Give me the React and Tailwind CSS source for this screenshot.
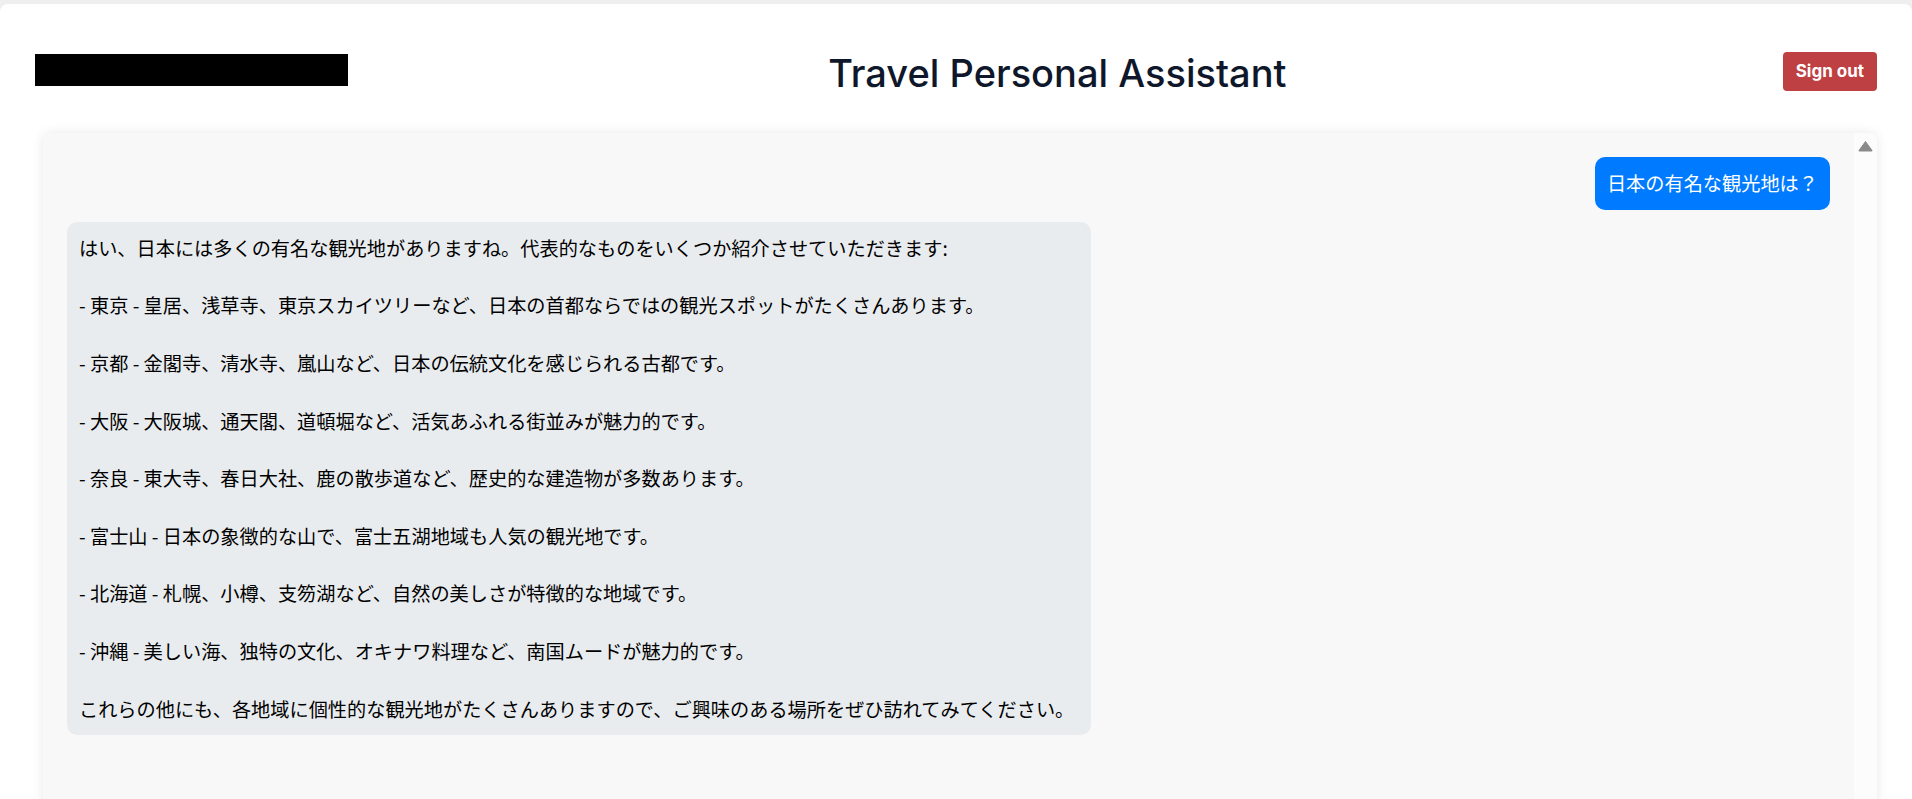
import React from "react";

const answer = `はい、日本には多くの有名な観光地がありますね。代表的なものをいくつか紹介させていただきます:

- 東京 - 皇居、浅草寺、東京スカイツリーなど、日本の首都ならではの観光スポットがたくさんあります。

- 京都 - 金閣寺、清水寺、嵐山など、日本の伝統文化を感じられる古都です。

- 大阪 - 大阪城、通天閣、道頓堀など、活気あふれる街並みが魅力的です。

- 奈良 - 東大寺、春日大社、鹿の散歩道など、歴史的な建造物が多数あります。

- 富士山 - 日本の象徴的な山で、富士五湖地域も人気の観光地です。

- 北海道 - 札幌、小樽、支笏湖など、自然の美しさが特徴的な地域です。

- 沖縄 - 美しい海、独特の文化、オキナワ料理など、南国ムードが魅力的です。

これらの他にも、各地域に個性的な観光地がたくさんありますので、ご興味のある場所をぜひ訪れてみてください。`;

const jp = { fontFamily: '"Noto Sans CJK JP", "Noto Sans", sans-serif' };

export default function App() {
  return (
    <div className="h-[799px] overflow-hidden bg-[#efefef] pt-[4px]">
      <div className="h-full rounded-t-lg bg-white px-[35px] pt-[48px]" style={{ fontFamily: 'Inter, "Noto Sans", sans-serif' }}>
        <header className="flex h-[40px] items-start justify-between">
          <div className="mt-[2px] h-[32px] w-[313px] bg-black" />
          <h1 className="mr-[16px] mt-[1px] text-[38px] leading-[40px] font-medium text-[#0f172a]">Travel Personal Assistant</h1>
          <button className="h-[39px] rounded-[4px] bg-[#bf4042] px-[13px] text-[17px] font-bold text-white">
            Sign out
          </button>
        </header>

        <div className="ml-2 mt-[41px] flex h-[700px] rounded-lg bg-[#f8f8f8] shadow-[0_0_12px_rgba(0,0,0,0.09)]">
          <div className="flex flex-1 flex-col gap-3 p-6" style={jp}>
            <div className="self-end rounded-[10px] bg-[#007bff] p-3 text-[19.2px] leading-[28.8px] text-white">
              日本の有名な観光地は？
            </div>
            <div className="w-fit self-start whitespace-pre-wrap rounded-[10px] bg-[#e9ecef] py-3 pl-3 pr-[17px] text-[19.2px] leading-[28.8px] text-black">
              {answer}
            </div>
          </div>
          <div className="flex w-[23px] flex-col items-center rounded-tr-lg bg-[#fcfcfc] pt-[7px]">
            <svg width="15" height="12" viewBox="0 0 15 12">
              <path d="M7.5 1.5 L14 10.5 Q14.3 11 13.6 11 L1.4 11 Q0.7 11 1 10.5 Z" fill="#8a8a8a" stroke="#8a8a8a" strokeWidth="1" strokeLinejoin="round" />
            </svg>
          </div>
        </div>
      </div>
    </div>
  );
}
